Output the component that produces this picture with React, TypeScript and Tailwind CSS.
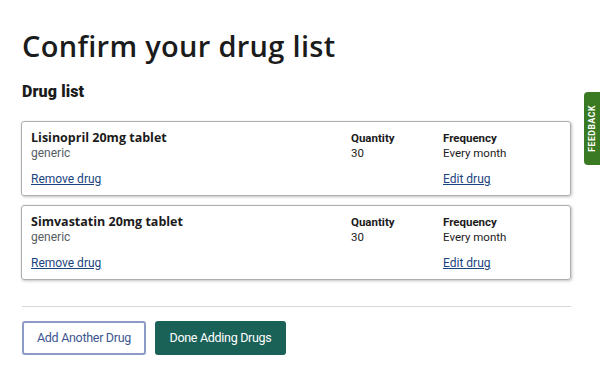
export default function App() {
  const drugs = [
    { name: "Lisinopril 20mg tablet", qty: "30", freq: "Every month" },
    { name: "Simvastatin 20mg tablet", qty: "30", freq: "Every month" },
  ];
  const heading = { fontFamily: "'Open Sans', 'Noto Sans', sans-serif" };
  return (
    <div className="relative w-[600px] h-[371px] overflow-hidden bg-white text-[#1b1b1b]" style={{ fontFamily: "Roboto, 'Liberation Sans', sans-serif" }}>
      <div className="pl-[22px] pr-[29px] pt-[28px]">
        <h1 className="text-[29px] leading-[36px] font-semibold tracking-[0.3px]" style={heading}>
          Confirm your drug list
        </h1>
        <h2 className="mt-[17px] text-[16px] leading-[22px] font-black tracking-[0.1px]">Drug list</h2>
        <div className="mt-[18px] flex flex-col gap-[9px] -ml-px">
          {drugs.map((d) => (
            <div key={d.name} className="h-[75px] rounded-[3px] border border-[#a9aeb1] shadow-[1px_1px_3px_rgba(0,0,0,0.25)] pl-[9px] pt-[8px] flex">
              <div className="w-[320px] flex flex-col">
                <div className="text-[12.5px] leading-[16px] font-bold" style={heading}>{d.name}</div>
                <div className="text-[12px] leading-[14px] text-[#565c65]">generic</div>
                <a href="#" className="mt-[12px] text-[12px] leading-[15px] text-[#1a4480] underline">Remove drug</a>
              </div>
              <div className="w-[92px] flex flex-col">
                <div className="text-[11.5px] leading-[16px] font-bold">Quantity</div>
                <div className="text-[11.5px] leading-[14px]">{d.qty}</div>
              </div>
              <div className="flex flex-col">
                <div className="text-[11.5px] leading-[16px] font-bold">Frequency</div>
                <div className="text-[11.5px] leading-[14px]">{d.freq}</div>
                <a href="#" className="mt-[12px] text-[12px] leading-[15px] text-[#1a4480] underline">Edit drug</a>
              </div>
            </div>
          ))}
        </div>
        <div className="mt-[26px] h-px bg-[#d6d7d9]" />
        <div className="mt-[14px] flex gap-[9px]">
          <button className="h-[34px] w-[124px] rounded-[3px] border-2 border-[#8c9cc4] text-[#3d5591] text-[12.5px] tracking-[-0.3px] bg-white">Add Another Drug</button>
          <button className="h-[34px] w-[131px] rounded-[3px] bg-[#1a6157] text-white text-[12.5px] tracking-[-0.3px]">Done Adding Drugs</button>
        </div>
      </div>
      <div className="absolute right-0 top-[92px] w-[16px] h-[73px] rounded-l-[4px] bg-[#3a7a22] flex items-center justify-center">
        <span className="block -rotate-90 whitespace-nowrap text-white text-[8.5px] font-bold tracking-[0.6px]">FEEDBACK</span>
      </div>
    </div>
  );
}
